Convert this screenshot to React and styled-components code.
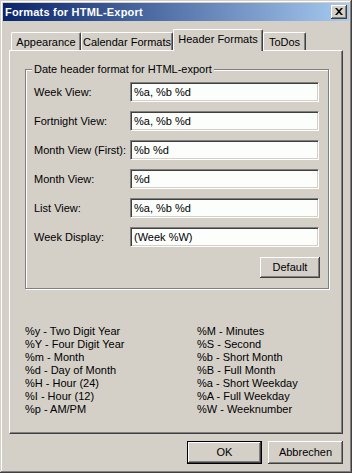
import React from "react";
import styled, { createGlobalStyle } from "styled-components";

const FACE = "#d4d0c8";
const FONT = `"Liberation Sans", Arial, sans-serif`;

const Global = createGlobalStyle`
  html, body { margin: 0; padding: 0; background: ${FACE}; }
  * { box-sizing: border-box; }
  #root { width: 352px; height: 473px; }
`;

const Window = styled.div`
  width: 352px;
  height: 473px;
  padding: 3px;
  background: ${FACE};
  box-shadow: inset -1px -1px #404040, inset 1px 1px ${FACE},
    inset -2px -2px #808080, inset 2px 2px #fff;
  display: flex;
  flex-direction: column;
  font-family: ${FONT};
  font-size: 11px;
  color: #000;
`;

const TitleBar = styled.div`
  height: 18px;
  flex: none;
  display: flex;
  align-items: center;
  justify-content: space-between;
  padding: 0 2px 0 2px;
  background: linear-gradient(to right, #0a246a, #a6caf0);
`;

const Title = styled.span`
  color: #fff;
  font-weight: bold;
  font-size: 11px;
  letter-spacing: 0.2px;
`;

const CloseBtn = styled.div`
  width: 16px;
  height: 14px;
  background: ${FACE};
  box-shadow: inset -1px -1px #404040, inset 1px 1px #fff,
    inset -2px -2px #808080, inset 2px 2px ${FACE};
  display: flex;
  align-items: center;
  justify-content: center;
  padding-bottom: 1px;
`;

const Body = styled.div`
  flex: 1;
  display: flex;
  flex-direction: column;
  padding: 8px 6px 0 6px;
`;

const TabStrip = styled.div`
  height: 22px;
  margin: 0 0 -1px 2px;
  display: flex;
  align-items: flex-start;
  position: relative;
  z-index: 1;
`;

const Tab = styled.div`
  width: ${(p) => p.$w}px;
  height: ${(p) => (p.$active ? 22 : 18)}px;
  margin-top: ${(p) => (p.$active ? 0 : 3)}px;
  background: ${FACE};
  border-top: 1px solid #fff;
  border-left: 1px solid #fff;
  border-right: 1px solid #404040;
  border-top-left-radius: 2px;
  border-top-right-radius: 2px;
  box-shadow: inset -1px 0 #808080;
  display: flex;
  align-items: center;
  justify-content: center;
  padding-bottom: ${(p) => (p.$active ? 3 : 0)}px;
  white-space: nowrap;
`;

const Panel = styled.div`
  width: 334px;
  height: 384px;
  flex: none;
  background: ${FACE};
  border-top: 1px solid #fff;
  border-left: 1px solid #fff;
  border-right: 1px solid #404040;
  border-bottom: 1px solid #404040;
  box-shadow: inset -1px -1px #808080;
  padding: 18px 12px 0 15px;
  display: flex;
  flex-direction: column;
`;

const Group = styled.div`
  position: relative;
  width: 304px;
  height: 220px;
  border: 1px solid #808080;
  box-shadow: inset 1px 1px #fff, 1px 1px #fff;
  padding: 12px 9px 0 8px;
  display: flex;
  flex-direction: column;
  gap: 9px;
`;

const Caption = styled.span`
  position: absolute;
  top: -7px;
  left: 6px;
  padding: 0 2px;
  background: ${FACE};
  line-height: 13px;
  white-space: nowrap;
`;

const Row = styled.div`
  display: flex;
  align-items: center;
  height: 20px;
`;

const Label = styled.span`
  width: 96px;
  flex: none;
  white-space: nowrap;
`;

const Input = styled.div`
  width: 189px;
  height: 20px;
  background: #fcfefc;
  border-top: 1px solid #808080;
  border-left: 1px solid #808080;
  border-right: 1px solid #fff;
  border-bottom: 1px solid #fff;
  box-shadow: inset 1px 1px #404040, inset -1px -1px ${FACE};
  padding: 0 3px;
  display: flex;
  align-items: center;
  white-space: nowrap;
`;

const Button = styled.div`
  width: ${(p) => p.$w}px;
  height: ${(p) => p.$h}px;
  background: ${FACE};
  display: flex;
  align-items: center;
  justify-content: center;
  box-shadow: ${(p) =>
    p.$default
      ? `inset 0 0 0 1px #000, inset -2px -2px #404040, inset 2px 2px #fff, inset -3px -3px #808080`
      : `inset -1px -1px #404040, inset 1px 1px #fff, inset -2px -2px #808080`};
  padding-bottom: 1px;
`;

const GroupFooter = styled.div`
  display: flex;
  justify-content: flex-end;
  margin-top: 1px;
  margin-right: -1px;
`;

const Legend = styled.div`
  margin-top: 36px;
  display: grid;
  grid-template-columns: 172px auto;
  grid-auto-flow: column;
  grid-template-rows: repeat(7, 13px);
  line-height: 13px;
  white-space: nowrap;
`;

const Footer = styled.div`
  margin-top: 7px;
  display: flex;
  justify-content: flex-end;
  gap: 6px;
`;

const rows = [
  ["Week View:", "%a, %b %d"],
  ["Fortnight View:", "%a, %b %d"],
  ["Month View (First):", "%b %d"],
  ["Month View:", "%d"],
  ["List View:", "%a, %b %d"],
  ["Week Display:", "(Week %W)"],
];

const legend = [
  "%y - Two Digit Year",
  "%Y - Four Digit Year",
  "%m - Month",
  "%d - Day of Month",
  "%H - Hour (24)",
  "%I - Hour (12)",
  "%p - AM/PM",
  "%M - Minutes",
  "%S - Second",
  "%b - Short Month",
  "%B - Full Month",
  "%a - Short Weekday",
  "%A - Full Weekday",
  "%W - Weeknumber",
];

const tabs = [
  ["Appearance", 70],
  ["Calendar Formats", 92],
  ["Header Formats", 90, true],
  ["ToDos", 43],
];

export default function App() {
  return (
    <>
      <Global />
      <Window>
        <TitleBar>
          <Title>Formats for HTML-Export</Title>
          <CloseBtn>
            <svg width="8" height="7" viewBox="0 0 8 7">
              <path
                d="M0 0h2l2 2.3L6 0h2L5 3.5 8 7H6L4 4.7 2 7H0l3-3.5z"
                fill="#000"
              />
            </svg>
          </CloseBtn>
        </TitleBar>
        <Body>
          <TabStrip>
            {tabs.map(([t, w, a]) => (
              <Tab key={t} $w={w} $active={a}>
                {t}
              </Tab>
            ))}
          </TabStrip>
          <Panel>
            <Group>
              <Caption>Date header format for HTML-export</Caption>
              {rows.map(([l, v]) => (
                <Row key={l}>
                  <Label>{l}</Label>
                  <Input>{v}</Input>
                </Row>
              ))}
              <GroupFooter>
                <Button $w={60} $h={21}>Default</Button>
              </GroupFooter>
            </Group>
            <Legend>
              {legend.map((t) => (
                <span key={t}>{t}</span>
              ))}
            </Legend>
          </Panel>
          <Footer>
            <Button $w={75} $h={23} $default>OK</Button>
            <Button $w={75} $h={23}>Abbrechen</Button>
          </Footer>
        </Body>
      </Window>
    </>
  );
}
